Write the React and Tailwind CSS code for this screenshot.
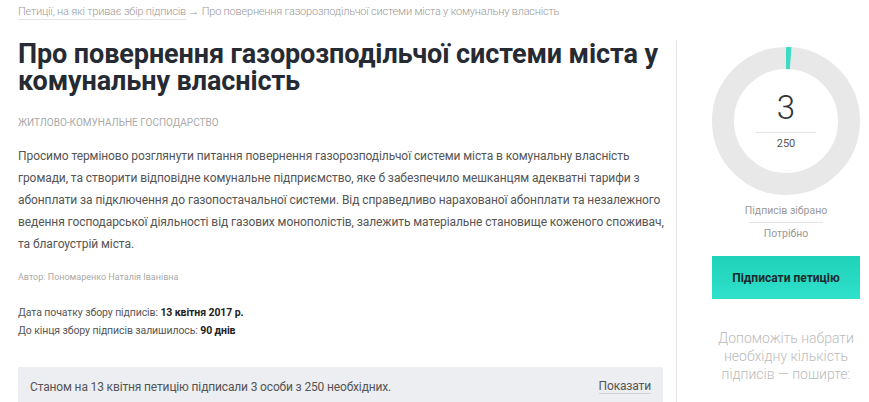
import React from "react";

function Ring({ count, goal }) {
  const r = 63;
  const c = 2 * Math.PI * r;
  const frac = count / goal;
  return (
    <div className="relative w-[148px] h-[148px]">
      <svg width="148" height="148" viewBox="0 0 148 148" className="absolute inset-0">
        <circle cx="74" cy="74" r={r} fill="none" stroke="#e8e8e8" strokeWidth="22" />
        <circle
          cx="74"
          cy="74"
          r={r}
          fill="none"
          stroke="#3ddbc3"
          strokeWidth="22"
          strokeDasharray={`${c * frac} ${c}`}
          transform="rotate(-90 74 74)"
        />
      </svg>
      <div className="absolute inset-0 flex flex-col items-center justify-center">
        <div className="text-[33px] leading-none font-light text-[#333] mt-[2px]">{count}</div>
        <div className="w-[60px] border-t border-[#e5e5e5] mt-[8px]" />
        <div className="text-[11px] text-[#555] mt-[3px]">{goal}</div>
      </div>
    </div>
  );
}

export default function App() {
  return (
    <div className="w-[869px] h-[402px] overflow-hidden bg-white flex font-['Roboto',sans-serif]">
      <div className="w-[663px] pl-[18px] shrink-0">
        <div className="pt-[5px] text-[11px] font-light text-[#999] leading-[14px] tracking-[-0.2px]">
          <span className="border-b border-[#e3e3e3] pb-[1px]">Петиції, на які триває збір підписів</span>
          <span> → Про повернення газорозподільчої системи міста у комунальну власність</span>
        </div>
        <h1 className="mt-[22px] text-[27px] leading-[27px] font-bold text-[#262a33] tracking-[-0.1px]">
          Про повернення газорозподільчої системи міста у комунальну власність
        </h1>
        <div className="mt-[20px] text-[10px] uppercase text-[#aaa]">
          Житлово-комунальне господарство
        </div>
        <p className="mt-[15px] w-[654px] text-[12px] leading-[22px] text-[#555] tracking-[-0.08px]">
          Просимо терміново розглянути питання повернення газорозподільчої системи міста в комунальну власність
          громади, та створити відповідне комунальне підприємство, яке б забезпечило мешканцям адекватні тарифи з
          абонплати за підключення до газопостачальної системи. Від справедливо нарахованої абонплати та незалежного
          ведення господарської діяльності від газових монополістів, залежить матеріальне становище коженого споживач,
          та благоустрій міста.
        </p>
        <div className="mt-[16px] text-[9px] text-[#aaa]">Автор: Пономаренко Наталія Іванівна</div>
        <div className="mt-[19px] text-[10.5px] leading-[18px] text-[#555] tracking-[-0.1px]">
          <div>
            Дата початку збору підписів: <b className="text-[#222]">13 квітня 2017 р.</b>
          </div>
          <div>
            До кінця збору підписів залишилось: <b className="text-[#222]">90 днів</b>
          </div>
        </div>
        <div className="mt-[27px] h-[40px] bg-[#eceef1] flex items-center justify-between pl-[12px] pr-[12px] text-[12px] text-[#555] tracking-[-0.15px]">
          <span>Станом на 13 квітня петицію підписали 3 особи з 250 необхідних.</span>
          <span className="border-b border-[#cfd2d6] leading-[14px]">Показати</span>
        </div>
      </div>
      <div className="ml-[13px] mt-[40px] w-px bg-[#e5e5e5] shrink-0" />
      <div className="pl-[35px] pt-[47px]">
        <div className="w-[148px] flex flex-col items-center">
          <Ring count={3} goal={250} />
          <div className="mt-[9px] text-[10.5px] text-[#999] leading-[14px]">Підписів зібрано</div>
          <div className="w-[74px] border-t border-[#e5e5e5] mt-[4px]" />
          <div className="mt-[4px] text-[10.5px] text-[#999] leading-[14px]">Потрібно</div>
          <button className="mt-[15px] w-[148px] h-[43px] bg-gradient-to-b from-[#1ed2b8] to-[#2fe0cb] text-[12px] font-bold text-[#1b2a2e]">
            Підписати петицію
          </button>
          <div className="mt-[30px] w-[160px] text-center text-[14px] leading-[18px] text-[#bbb] font-light">
            Допоможіть набрати необхідну кількість підписів — поширте:
          </div>
        </div>
      </div>
    </div>
  );
}
